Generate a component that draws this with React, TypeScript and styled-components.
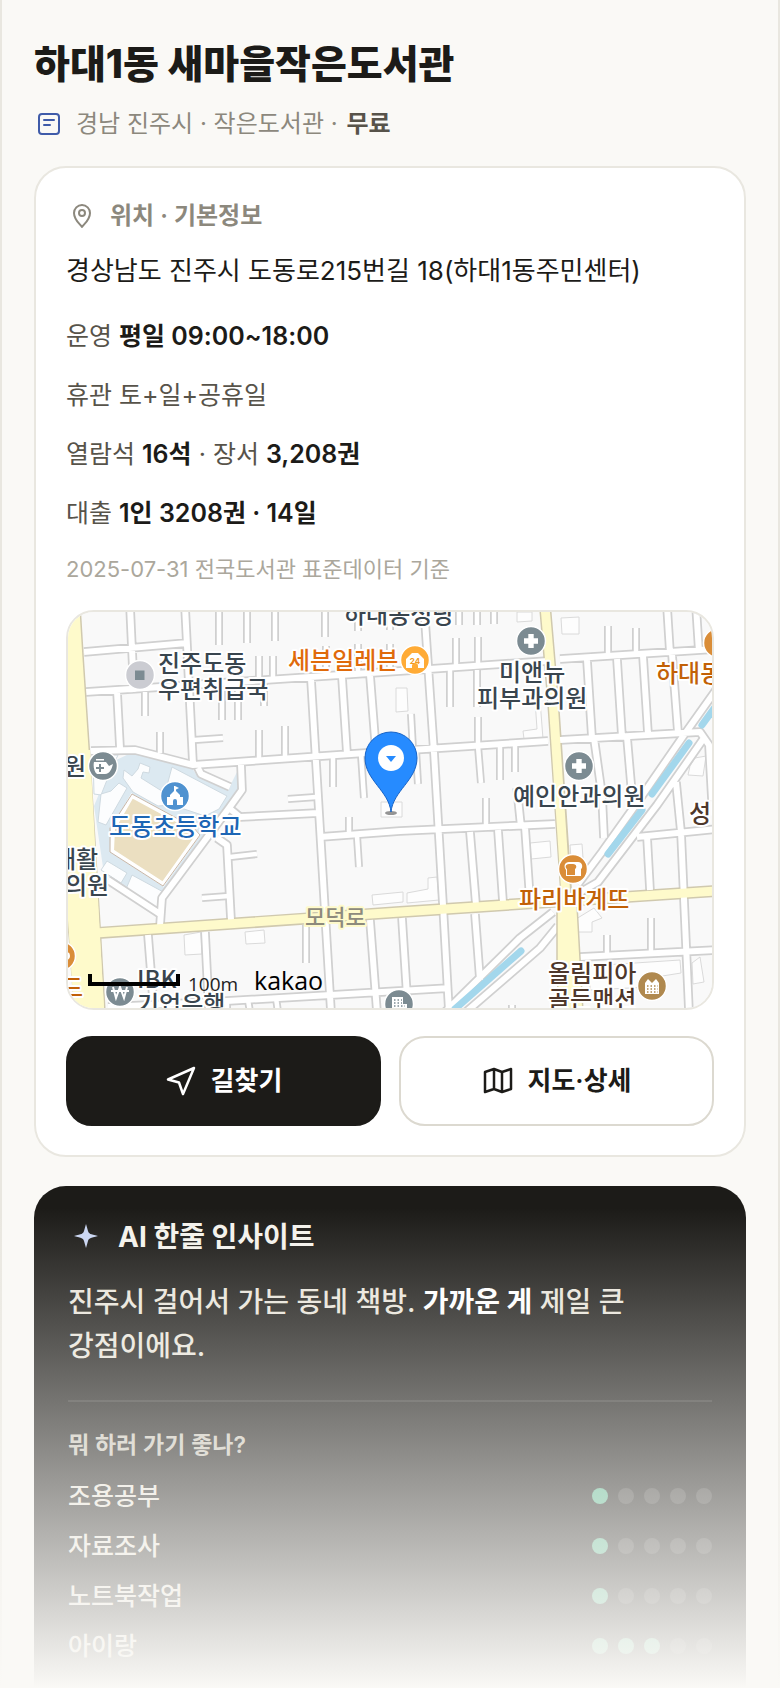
import { ReactNode } from "react";
import styled, { createGlobalStyle } from "styled-components";

const GlobalStyle = createGlobalStyle`
  * {
    box-sizing: border-box;
  }

  body {
    margin: 0;
    background-color: #faf9f6;
    color: #1c1b18;
    font-family: Inter, "Noto Sans CJK KR", sans-serif;
  }

  h1, h2, h3, p, ul {
    margin: 0;
    padding: 0;
  }
`;

const Page = styled.main`
  position: relative;
  display: flex;
  flex-direction: column;
  min-height: 100vh;
  padding: 37px 32px 0;
  border: solid #e9e7e0;
  border-width: 0 2px;
`;

const Title = styled.h1`
  font-size: 39px;
  font-weight: 800;
  line-height: 54px;
`;

const Meta = styled.p`
  display: flex;
  align-items: center;
  gap: 14px;
  margin-top: 15px;
  padding-left: 2px;
  font-size: 24px;
  line-height: 36px;
  color: #8c887d;

  strong {
    margin-left: 2px;
    font-weight: 600;
    color: #57534a;
  }
`;

const Card = styled.section`
  margin-top: 24px;
  padding: 31px 30px 29px;
  background-color: #fff;
  border: 2px solid #e9e7e0;
  border-radius: 32px;
`;

const CardHeading = styled.h2`
  display: flex;
  align-items: center;
  gap: 14px;
  padding-left: 2px;
  font-size: 24px;
  font-weight: 600;
  line-height: 34px;
  color: #8c887d;
`;

const Address = styled.p`
  margin-top: 18px;
  font-size: 26px;
  line-height: 40px;
`;

const Facts = styled.ul`
  display: flex;
  flex-direction: column;
  gap: 23px;
  margin-top: 27px;
  list-style: none;
`;

const Fact = styled.li`
  font-size: 25px;
  line-height: 36px;
  color: #57534a;

  strong {
    font-weight: 600;
    color: #1c1b18;
  }
`;

const Source = styled.p`
  margin-top: 23px;
  font-size: 22px;
  line-height: 30px;
  color: #aba79c;
`;

const MapBox = styled.div`
  height: 400px;
  margin-top: 26px;
  overflow: hidden;
  background-color: #f9f9f9;
  border: 2px solid #e9e7e0;
  border-radius: 28px;

  svg {
    display: block;
    width: 100%;
    height: 100%;
  }
`;

const Actions = styled.div`
  display: grid;
  grid-template-columns: repeat(2, 1fr);
  gap: 18px;
  margin-top: 26px;
`;

const ActionButton = styled.button<{ $primary?: boolean }>`
  display: flex;
  align-items: center;
  justify-content: center;
  gap: 14px;
  height: 90px;
  color: ${(props) => (props.$primary ? "#fff" : "#1c1b18")};
  background-color: ${(props) => (props.$primary ? "#1c1b18" : "#fff")};
  border: 2px solid ${(props) => (props.$primary ? "#1c1b18" : "#dcd9d0")};
  border-radius: 26px;
  font-family: inherit;
  font-size: 26px;
  font-weight: 600;
  line-height: 36px;
  cursor: pointer;
`;

const Insight = styled.section`
  flex: 1;
  margin-top: 29px;
  padding: 33px 34px 24px;
  background-color: #1c1b18;
  border-radius: 32px 32px 0 0;
  color: #e8e4da;
`;

const InsightHeading = styled.h2`
  display: flex;
  align-items: center;
  gap: 16px;
  font-size: 28px;
  font-weight: 700;
  line-height: 36px;
  color: #f4f2ec;
`;

const InsightText = styled.p`
  margin-top: 25px;
  padding-bottom: 32px;
  border-bottom: 2px solid rgba(255, 255, 255, 0.1);
  font-size: 28px;
  font-weight: 500;
  line-height: 44px;
  word-break: keep-all;

  strong {
    font-weight: 700;
    color: #fff;
  }
`;

const PurposeTitle = styled.h3`
  margin-top: 27px;
  font-size: 23px;
  font-weight: 600;
  line-height: 32px;
  color: #c8c4b8;
`;

const Purposes = styled.ul`
  display: flex;
  flex-direction: column;
  gap: 14px;
  margin-top: 17px;
  list-style: none;
`;

const Purpose = styled.li`
  display: flex;
  align-items: center;
  justify-content: space-between;
  font-size: 25px;
  font-weight: 500;
  line-height: 36px;
`;

const Dots = styled.div`
  display: flex;
  gap: 10px;
`;

const Dot = styled.span<{ $on: boolean }>`
  width: 16px;
  height: 16px;
  border-radius: 50%;
  background-color: ${(props) =>
    props.$on ? "#56b48c" : "rgba(255, 255, 255, 0.14)"};
`;

const Fade = styled.div`
  position: absolute;
  inset: auto -2px 0;
  height: 480px;
  background: linear-gradient(rgba(250, 249, 246, 0), #faf9f6);
  pointer-events: none;
`;

const PlaceName = styled.text`
  font-family: "Noto Sans CJK KR", sans-serif;
  font-size: 24px;
  font-weight: 500;
  stroke: #fff;
  stroke-width: 4px;
  stroke-linejoin: round;
  paint-order: stroke;
`;

const RoadName = styled(PlaceName)`
  font-size: 22px;
  fill: #8d8a7c;
  stroke: #fefacb;
`;

const purposes = [
  { name: "조용공부", score: 1 },
  { name: "자료조사", score: 1 },
  { name: "노트북작업", score: 1 },
  { name: "아이랑", score: 3 },
];

const streets = [
  "M84 652L187 643",
  "M130 606L134 692",
  "M185 606L193 764",
  "M86 692L400 671L548 661",
  "M560 659L716 649",
  "M91 751L135 750L193 765L380 752L548 741",
  "M117 691L120 748",
  "M311 679L331 1012",
  "M342 677L347 754",
  "M370 675L376 752",
  "M198 768L201 774L230 787",
  "M241 765L242 790L229 808L177 878L162 898L160 926",
  "M108 880L160 914",
  "M229 808L240 817L318 813",
  "M217 838L227 845L231 920",
  "M320 837L400 831L555 824",
  "M148 935L153 998",
  "M205 932L209 1012",
  "M370 920L377 1012",
  "M108 1007L210 1002L450 988",
  "M424 606L434 752L443 905L449 1012",
  "M470 832L476 905",
  "M498 830L503 902",
  "M525 827L530 900",
  "M517 788L521 827",
  "M560 740L700 732L709 745L712 800",
  "M587 660L592 738",
  "M594 738L602 795L604 838",
  "M617 659L622 737",
  "M627 737L632 795",
  "M643 656L648 734",
  "M672 654L678 733",
  "M667 606L670 653",
  "M696 606L699 652",
  "M716 690L684 735L637 803L602 852L578 884",
  "M704 738L657 805L598 882L570 898",
  "M553 912L520 938L445 1012",
  "M558 926L540 948L466 1012",
  "M637 837L716 829",
  "M647 836L650 890",
  "M676 782L681 832L689 1012",
  "M580 957L716 950",
  "M402 918L408 1012",
  "M475 914L480 980",
];

const alleys = [
  "M145 692V716", "M160 732V753", "M194 740L223 738", "M222 690V720",
  "M238 688V720", "M264 684V706", "M259 656V680", "M273 656V678",
  "M259 730V760", "M285 726V758", "M333 756V787", "M361 754L364 798",
  "M219 606V645", "M247 606V643", "M275 606V641", "M325 606V637",
  "M358 606V631", "M390 606V630", "M326 646V674", "M358 644V672",
  "M390 644V671", "M288 799L316 797", "M230 857L257 854",
  "M202 898L229 896", "M349 817V834", "M357 836L359 867", "M306 925V963",
  "M456 638V667", "M478 637V665", "M459 606V625", "M477 606V625",
  "M494 606V624", "M450 670V707", "M477 670V707", "M478 717V744",
  "M411 714L413 750", "M416 750L418 784", "M478 746L481 783",
  "M500 746V780", "M515 745V772", "M486 798V828", "M608 626V658",
  "M636 628V657", "M607 935V957", "M651 918V955", "M512 1005V1012",
  "M248 1000L250 1012", "M276 998L278 1012", "M227 1000V1012",
];

const buildings = [
  "M184 935L201 932L202 954L185 955Z",
  "M245 932L264 930L265 943L246 944Z",
  "M396 688L407 688L408 711L396 712Z",
  "M381 802L402 802L402 817L381 817Z",
  "M372 895L403 892L403 902L373 905Z",
  "M407 893L428 889L428 878L437 877L439 900L407 903Z",
  "M530 843L550 841L551 857L531 859Z",
  "M561 618L579 617L579 634L562 634Z",
  "M517 612L532 612L532 621L517 622Z",
  "M523 731L537 729L535 700L540 700L543 739L524 739Z",
  "M570 845L582 844L583 858L571 858Z",
  "M576 919L594 908L602 918L592 922L592 932L577 932Z",
  "M690 766L695 758L706 756L703 776L688 775Z",
  "M692 963L700 957L704 982L693 984Z",
  "M590 966L680 960L681 973L650 978L649 987L590 990Z",
];

const MapLabels = () => (
  <>
    <g fill="#39454e">
      <PlaceName x="344" y="623">하대동성당</PlaceName>
      <PlaceName x="158" y="672">진주도동</PlaceName>
      <PlaceName x="158" y="698">우편취급국</PlaceName>
      <PlaceName x="499" y="681">미앤뉴</PlaceName>
      <PlaceName x="477" y="707">피부과의원</PlaceName>
      <PlaceName x="513" y="805">예인안과의원</PlaceName>
      <PlaceName x="64" y="775">원</PlaceName>
      <PlaceName x="54" y="868">재활</PlaceName>
      <PlaceName x="65" y="894">의원</PlaceName>
      <PlaceName x="137" y="988">IBK</PlaceName>
      <PlaceName x="137" y="1013">기업은행</PlaceName>
    </g>
    <g fill="#e06a0a">
      <PlaceName x="288" y="669">세븐일레븐</PlaceName>
    </g>
    <g fill="#c26107">
      <PlaceName x="656" y="682">하대동</PlaceName>
      <PlaceName x="519" y="908">파리바게뜨</PlaceName>
      <PlaceName x="61" y="996">드</PlaceName>
    </g>
    <g fill="#1d66b5">
      <PlaceName x="109" y="835">도동초등학교</PlaceName>
    </g>
    <g fill="#4e372b">
      <PlaceName x="689" y="822">성당</PlaceName>
      <PlaceName x="548" y="982">올림피아</PlaceName>
      <PlaceName x="548" y="1008">골든맨션</PlaceName>
    </g>
  </>
);

const Poi = ({
  x,
  y,
  color,
  children,
}: {
  x: number;
  y: number;
  color: string;
  children?: ReactNode;
}) => (
  <g transform={`translate(${x} ${y})`}>
    <circle r="14.5" fill={color} stroke="#fff" strokeWidth="1.5" />
    <g fill="#fff">{children}</g>
  </g>
);

const Cross = () => <path d="M-2.7-7H2.7V-2.7H7V2.7H2.7V7H-2.7V2.7H-7V-2.7H-2.7Z" />;

const StreetMap = () => (
  <svg
    viewBox="68 612 644 396"
    preserveAspectRatio="xMidYMid slice"
    role="img"
    aria-label="하대1동 새마을작은도서관"
  >
    <rect x="60" y="606" width="660" height="410" fill="#f9f9f9" />

    {/* school grounds */}
    <path
      d="M112 762L131 753L192 768L198 777L228 790L238 770V790L221 812L174 875L160 908L104 874L94 806Z"
      fill="#dce9f1"
    />
    <g fill="#fcfdfe" stroke="#cfdae1" strokeWidth="1">
      <path d="M93 755L118 755L111 770L101 795L94 794Z" />
      <path d="M124 770L132 776L138 769L140 763L150 767L149 773L143 772L141 778L165 793L172 767L227 796L219 809L205 816L172 805L158 806L133 792L123 778Z" />
      <path d="M101 794L111 791L119 783L127 788L106 825L98 822Z" />
      <path d="M107 861L127 873L121 883L101 870Z" />
      <path d="M132 875L167 894L161 910L126 889Z" />
    </g>
    <path
      d="M132 796L113 829L112 851L163 884L198 835L193 829Z"
      fill="#ebdfc1"
      stroke="#fff"
      strokeWidth="4"
    />
    <path
      d="M132 794L110 828V852L163 886L200 835L193 827Z"
      fill="none"
      stroke="#c9b7a7"
    />

    <g fill="#fdfdfd" stroke="#dadada" strokeWidth="1">
      {buildings.map((d) => (
        <path key={d} d={d} />
      ))}
    </g>

    <g fill="none" stroke="#d0d0d0" strokeLinejoin="round">
      <path d={streets.join("")} strokeWidth="9.5" />
      <path d={alleys.join("")} strokeWidth="8" />
    </g>
    <g fill="none" stroke="#d0c9ae">
      <path d="M98 933L400 912L716 891" strokeWidth="12" />
      <path d="M545 606L553 700L567 905" strokeWidth="12" />
    </g>
    <g fill="none" stroke="#fff" strokeLinejoin="round">
      <path d={streets.join("")} strokeWidth="6" />
      <path d={alleys.join("")} strokeWidth="4.5" />
    </g>
    <path
      d="M60 606H80L83 655L90 760L100 926L105 1012H73L67 900L60 850Z"
      fill="#fefacb"
      stroke="#d0c9ae"
      strokeWidth="1.5"
    />
    <path
      d="M557 905L557 970L559 1012H583L577 905Z"
      fill="#fefacb"
      stroke="#d0c9ae"
      strokeWidth="1.5"
    />
    <g fill="none" stroke="#fefacb" strokeWidth="9">
      <path d="M96 933L400 912L716 891" />
      <path d="M545 606L553 700L567 912" />
    </g>
    <path d="M60 800L74 1010H104L90 750H60Z" fill="#fefacb" />
    <path d="M66 905L74 1012H60V905Z" fill="#f9f9f9" />

    {/* stream */}
    <g stroke="#a3d7ec" strokeWidth="7" strokeLinecap="round">
      <path d="M702 725L718 703" />
      <path d="M689 743L652 794" />
      <path d="M642 810L608 854" />
      <path d="M521 951L455 1009" />
    </g>

    <RoadName x="305" y="925">모덕로</RoadName>

    <Poi x={140} y={675} color="#cbccd2">
      <path d="M-5-4.5H4.5V5H-5Z" fill="#7c8b92" />
    </Poi>
    <Poi x={415} y={660} color="#ffab36">
      <path d="M-9-1L-3-7H3L9-1V8H3V6A3 3 0 0 0-3 6V8H-9Z" />
      <text y="4" textAnchor="middle" fill="#f19a23" fontFamily="Inter, sans-serif" fontSize="8" fontWeight="700">
        24
      </text>
    </Poi>
    <Poi x={531} y={641} color="#7c8b92">
      <Cross />
    </Poi>
    <Poi x={579} y={766} color="#7c8b92">
      <Cross />
    </Poi>
    <Poi x={103} y={766} color="#7c8b92">
      <path d="M-7-7H1V-5.5H-7ZM-9-4H3L6 0L10-2C9 2 7 8 2 8H-6C-9 6-10 0-9-4Z" />
      <path d="M-3-2V6M-7 2H1" stroke="#7c8b92" strokeWidth="2" />
    </Poi>
    <Poi x={175} y={796} color="#4f92d0">
      <path d="M0-10L4-8L1-6.5V-5L5-1V1H8V9H2V5A2 2 0 0 0-2 5V9H-8V1H-5V-1L-1-5V-10Z" />
    </Poi>
    <Poi x={573} y={869} color="#da8d38">
      <path d="M-4-7H5C10-7 10-1 8 0V7H-7V1C-10-3-8-7-4-7Z" />
      <path d="M-4-5C-8-5-8-1-6 0V6H2V0C4-1 4-5 0-5Z" fill="#da8d38" />
    </Poi>
    <Poi x={718} y={643} color="#da8d38" />
    <Poi x={61} y={956} color="#da8d38">
      <path d="M5-4A4 4 0 1 1 5 4Z" />
    </Poi>
    <Poi x={652} y={986} color="#b0894f">
      <path d="M-7 8V-3L-4-7L0-3L4-7L7-3V8Z" />
      <path d="M-5 0H6M-5 3H6M-5 6H6" stroke="#b0894f" strokeWidth="1.5" strokeDasharray="1.5 2" />
    </Poi>
    <Poi x={399} y={1004} color="#7c8b92">
      <path d="M-7-7H4V0H8V8H-7Z" />
      <path d="M-5-4H3M-5-1H3M-5 2H6" stroke="#7c8b92" strokeWidth="1.5" strokeDasharray="1.5 2" />
    </Poi>
    <Poi x={120} y={992} color="#7c8b92">
      <path d="M-7-5L-4 6L0-5L4 6L7-5M-9-1H9" fill="none" stroke="#fff" strokeWidth="2" />
    </Poi>

    <MapLabels />

    {/* scale bar and provider name */}
    <path d="M90 974V984H178V974" fill="none" stroke="#000" strokeWidth="4" />
    <text x="188" y="991" fill="#222" fontFamily="Open Sans, sans-serif" fontSize="19">
      100m
    </text>
    <text x="254" y="990" fill="#000" fontFamily="Open Sans, sans-serif" fontSize="25">
      kakao
    </text>

    {/* library marker */}
    <ellipse cx="391" cy="813" rx="6" ry="2" fill="#666" opacity="0.7" />
    <path
      d="M391 812C389 791 365 780 365 758A26 26 0 0 1 417 758C417 780 393 791 391 812Z"
      fill="#268bff"
      stroke="#1763c6"
      strokeWidth="1"
    />
    <circle cx="391" cy="758" r="13" fill="#fff" />
    <path d="M386 756H396L391 762Z" fill="#268bff" />
  </svg>
);

export default function App() {
  return (
    <>
      <GlobalStyle />
      <Page>
        <Title>하대1동 새마을작은도서관</Title>
        <Meta>
          <svg width="26" height="26" viewBox="0 0 26 26" fill="none" stroke="#3f5ba9" strokeWidth="2" strokeLinecap="round">
            <rect x="3" y="3" width="20" height="20" rx="3" />
            <path d="M8 9H18M8 14H14" />
          </svg>
          <span>
            경남 진주시 · 작은도서관 · <strong>무료</strong>
          </span>
        </Meta>

        <Card>
          <CardHeading>
            <svg width="28" height="28" viewBox="0 0 28 28" fill="none" stroke="currentColor" strokeWidth="2" strokeLinejoin="round">
              <path d="M14 25C12 22 6 18 6 11A8 8 0 0 1 22 11C22 18 16 22 14 25Z" />
              <circle cx="14" cy="11" r="3" />
            </svg>
            위치 · 기본정보
          </CardHeading>
          <Address>경상남도 진주시 도동로215번길 18(하대1동주민센터)</Address>
          <Facts>
            <Fact>
              운영 <strong>평일 09:00~18:00</strong>
            </Fact>
            <Fact>휴관 토+일+공휴일</Fact>
            <Fact>
              열람석 <strong>16석</strong> · 장서 <strong>3,208권</strong>
            </Fact>
            <Fact>
              대출 <strong>1인 3208권 · 14일</strong>
            </Fact>
          </Facts>
          <Source>2025-07-31 전국도서관 표준데이터 기준</Source>

          <MapBox>
            <StreetMap />
          </MapBox>

          <Actions>
            <ActionButton $primary>
              <svg width="32" height="32" viewBox="0 0 32 32" fill="none" stroke="currentColor" strokeWidth="2.5" strokeLinejoin="round">
                <path d="M29 3L3 14.500L14 17.500L18 29Z" />
              </svg>
              길찾기
            </ActionButton>
            <ActionButton>
              <svg width="32" height="32" viewBox="0 0 32 32" fill="none" stroke="currentColor" strokeWidth="2.5" strokeLinejoin="round">
                <path d="M3 7L12 4L20 7L29 4V24L20 27L12 24L3 27ZM12 4V24M20 7V27" />
              </svg>
              지도·상세
            </ActionButton>
          </Actions>
        </Card>

        <Insight>
          <InsightHeading>
            <svg width="34" height="34" viewBox="0 0 34 34" fill="#c9d5f2">
              <path d="M18 4L20 11C21 14 22 14 30 16C22 18 21 18 20 21L18 28L16 21C15 18 14 18 6 16C14 14 15 14 16 11Z" />
            </svg>
            AI 한줄 인사이트
          </InsightHeading>
          <InsightText>
            진주시 걸어서 가는 동네 책방. <strong>가까운 게</strong> 제일 큰
            강점이에요.
          </InsightText>
          <PurposeTitle>뭐 하러 가기 좋나?</PurposeTitle>
          <Purposes>
            {purposes.map((purpose) => (
              <Purpose key={purpose.name}>
                {purpose.name}
                <Dots>
                  {[1, 2, 3, 4, 5].map((n) => (
                    <Dot key={n} $on={n <= purpose.score} />
                  ))}
                </Dots>
              </Purpose>
            ))}
          </Purposes>
        </Insight>
        <Fade />
      </Page>
    </>
  );
}
